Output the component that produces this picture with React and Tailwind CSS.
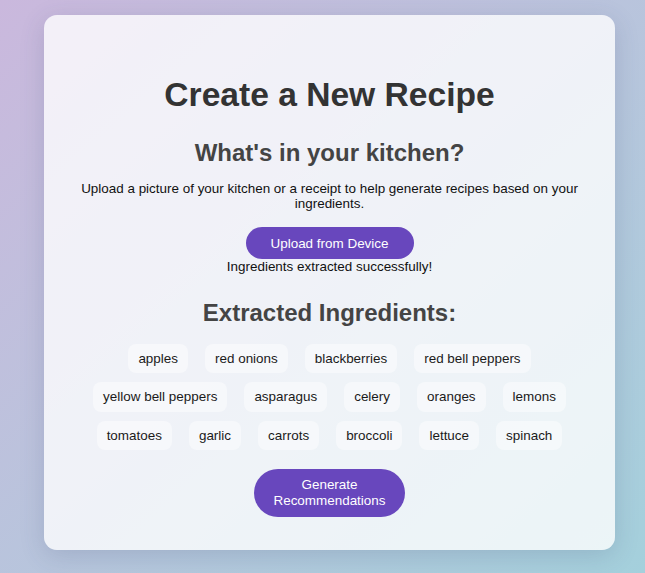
import React from "react";

const ingredients = [
  "apples",
  "red onions",
  "blackberries",
  "red bell peppers",
  "yellow bell peppers",
  "asparagus",
  "celery",
  "oranges",
  "lemons",
  "tomatoes",
  "garlic",
  "carrots",
  "broccoli",
  "lettuce",
  "spinach",
];

function App() {
  return (
    <div className="min-h-screen w-full overflow-hidden bg-linear-to-br from-[#cab8dd] to-[#a4d0dc] pt-[15px] pb-[23px] font-['Liberation_Sans',Arial,sans-serif]">
      <div className="ml-[44px] w-[571px] h-[535px] rounded-[13px] bg-white/[0.78] shadow-[0_6px_24px_rgba(60,70,110,0.18)] px-8 text-center">
        <h1 className="pt-[61px] text-[33.6px] leading-[37.5px] font-bold text-[#333]">
          Create a New Recipe
        </h1>

        <h2 className="mt-[25px] text-[24px] leading-[27px] font-bold text-[#444]">
          What's in your kitchen?
        </h2>
        <p className="mt-[15px] text-[13.44px] leading-[15.4px] text-[#111]">
          Upload a picture of your kitchen or a receipt to help generate recipes
          based on your ingredients.
        </p>

        <button
          type="button"
          className="mt-[16px] h-[32px] px-[25px] rounded-full bg-[#6847bd] text-white text-[13.44px] leading-[15.4px]"
        >
          Upload from Device
        </button>
        <p className="text-[13.44px] leading-[15.4px] text-[#111]">
          Ingredients extracted successfully!
        </p>

        <h2 className="mt-[24px] text-[24px] leading-[27px] font-bold text-[#444]">
          Extracted Ingredients:
        </h2>

        <div className="mt-[18px] flex flex-wrap justify-center gap-x-[17px] gap-y-[9px]">
          {ingredients.map((item) => (
            <span
              key={item}
              className="rounded-[8px] bg-white/45 px-[10px] py-[7px] text-[13.44px] leading-[15.4px] text-[#1a1a1a]"
            >
              {item}
            </span>
          ))}
        </div>

        <button
          type="button"
          className="mt-[19px] w-[151px] py-[8.4px] px-[19px] rounded-full bg-[#6847bd] text-white text-[13.44px] leading-[15.4px]"
        >
          Generate Recommendations
        </button>
      </div>
    </div>
  );
}

export default App;
